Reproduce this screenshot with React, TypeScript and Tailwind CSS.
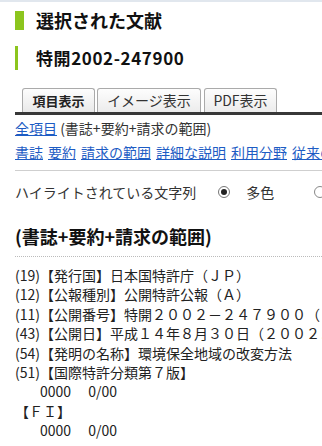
export default function App() {
  const links = ["書誌", "要約", "請求の範囲", "詳細な説明", "利用分野", "従来の技術"];
  const rows = [
    { text: "(19)【発行国】日本国特許庁（ＪＰ）" },
    { text: "(12)【公報種別】公開特許公報（Ａ）" },
    { text: "(11)【公開番号】特開２００２－２４７９００（Ｐ２００２－２４７９００Ａ）" },
    { text: "(43)【公開日】平成１４年８月３０日（２００２．８．３０）" },
    { text: "(54)【発明の名称】環境保全地域の改変方法" },
    { text: "(51)【国際特許分類第７版】" },
    { text: "0000　 0/00", indent: true },
    { text: "【ＦＩ】" },
    { text: "0000　 0/00", indent: true },
  ];

  return (
    <div
      className="w-[322px] h-[446px] overflow-hidden bg-white border-t-2 border-[#e1e7ee] text-[#222]"
      style={{ fontFamily: '"Noto Sans CJK JP", "Noto Sans", sans-serif' }}
    >
      <div className="pl-[15px] whitespace-nowrap">
        {/* page title */}
        <div className="mt-[9px] flex items-center h-[19px]">
          <span className="w-[9px] h-[19px] bg-[#8cc51e]" />
          <span className="ml-[12px] text-[18px] font-bold leading-[19px] text-[#111]">選択された文献</span>
        </div>

        {/* document number */}
        <div className="mt-[16px] flex items-center h-[24px]">
          <span className="w-[3px] h-[24px] bg-[#8cc51e]" />
          <span className="ml-[18px] text-[17px] font-bold leading-[24px] tracking-[0.6px] text-[#111]">特開2002-247900</span>
        </div>

        {/* tabs */}
        <div className="mt-[18px] ml-[7px] flex items-end">
          <div className="h-[24px] w-[73px] flex items-center justify-center rounded-t-[3px] border border-b-0 border-[#aaa] bg-gradient-to-b from-[#fdfdfd] to-[#e9e9e9] text-[13px] font-bold text-[#222]">
            項目表示
          </div>
          <div className="ml-[2px] h-[24px] w-[104px] flex items-center justify-center rounded-t-[3px] border border-b-0 border-[#aaa] bg-gradient-to-b from-[#fdfdfd] to-[#ececec] text-[14px] text-[#333]">
            イメージ表示
          </div>
          <div className="ml-[3px] h-[24px] w-[73px] flex items-center justify-center rounded-t-[3px] border border-b-0 border-[#aaa] bg-gradient-to-b from-[#fdfdfd] to-[#ececec] text-[14px] text-[#333]">
            PDF表示
          </div>
        </div>
        <div className="h-[3px] bg-[#383838]" />

        <div className="mt-[1px] text-[14px] leading-[24px] text-[#333]">
          <a className="text-[#1d5cc4] underline">全項目</a> (書誌+要約+請求の範囲)
        </div>
        <div className="flex gap-[5px] text-[14px] leading-[24px]">
          {links.map((l) => (
            <a key={l} className="text-[#1d5cc4] underline">
              {l}
            </a>
          ))}
        </div>

        <div className="mt-[6px] h-px bg-[#cfcfcf]" />

        {/* highlight option */}
        <div className="mt-[10px] flex items-center h-[22px] text-[14px] text-[#333]">
          <span>ハイライトされている文字列</span>
          <span className="ml-[22px] w-[12px] h-[12px] rounded-full border border-[#777] flex items-center justify-center shrink-0">
            <span className="w-[6px] h-[6px] rounded-full bg-[#222]" />
          </span>
          <span className="ml-[16px]">多色</span>
          <span className="ml-[40px] w-[12px] h-[12px] rounded-full border border-[#888] shrink-0" />
        </div>

        <div className="mt-[21px] text-[18px] font-bold leading-[24px] text-[#111]">(書誌+要約+請求の範囲)</div>

        <div className="mt-[8px] border-t border-dotted border-[#bbb]" />

        <div className="mt-[9px] text-[14px] leading-[19.4px] text-[#222] whitespace-pre">
          {rows.map((r, i) => (
            <div key={i} className={r.indent ? "pl-[25px]" : ""}>
              {r.text}
            </div>
          ))}
        </div>
      </div>
    </div>
  );
}
